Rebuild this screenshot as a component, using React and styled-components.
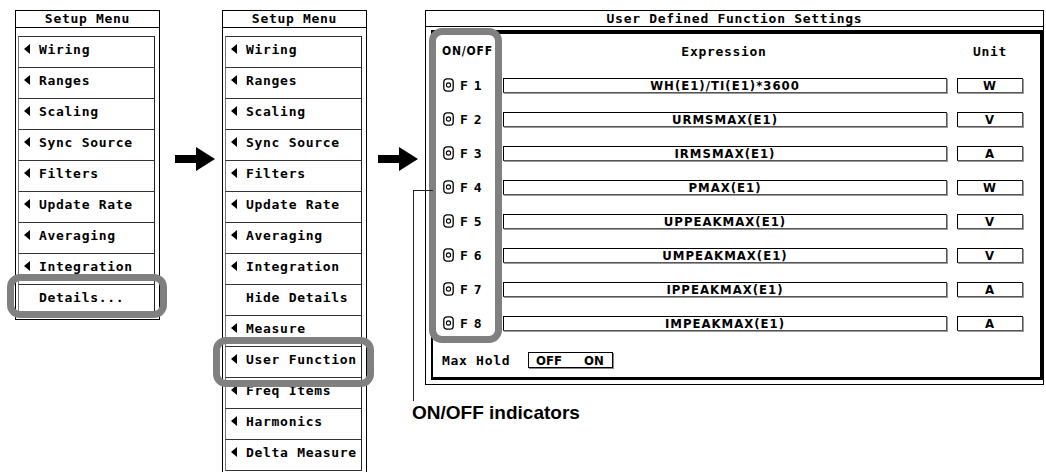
import React from 'react';
import styled, { createGlobalStyle } from 'styled-components';

const GlobalStyle = createGlobalStyle`
	html, body {
		margin: 0;
		padding: 0;
		background: #fff;
	}
	body {
		width: 1046px;
		height: 472px;
		overflow: hidden;
		font-family: "DejaVu Sans Mono", monospace;
		color: #000;
	}
`;

const screenFont = `
	font: bold 13px "DejaVu Sans Mono", monospace;
	letter-spacing: 0.7px;
`;

const narrowFont = `
	font: bold 13px "DejaVu Sans Condensed", "DejaVu Sans", sans-serif;
	letter-spacing: 1px;
`;

const Stage = styled.div`
	position: relative;
	width: 1046px;
	height: 472px;
	box-sizing: border-box;
	padding: 10px 0 0 15px;
	display: flex;
	align-items: flex-start;
`;

const Menu = styled.div`
	width: 145px;
	box-sizing: border-box;
	border: 1px solid #000;
	display: flex;
	flex-direction: column;
`;

const MenuTitle = styled.div`
	height: 16px;
	line-height: 16px;
	border-bottom: 1px solid #000;
	text-align: center;
	${screenFont}
`;

const MenuBody = styled.div`
	padding: 8px 4px 3px 2px;
	display: flex;
	flex-direction: column;
`;

const MenuButton = styled.div`
	height: 24px;
	padding: 0 0 6px 5px;
	box-sizing: content-box;
	border-top: 1px solid #333;
	border-left: 1px solid #777;
	border-right: 1px solid #222;
	display: flex;
	align-items: center;
	white-space: nowrap;
	${screenFont}

	&:last-child {
		border-bottom: 1px solid #333;
	}
`;

const Tri = styled.span`
	width: 0;
	height: 0;
	border-top: 5px solid transparent;
	border-bottom: 5px solid transparent;
	border-right: 6px solid ${({ $hidden }) => ($hidden ? 'transparent' : '#000')};
	margin-right: 9px;
	flex-shrink: 0;
`;

const ArrowBox = styled.div`
	width: 40px;
	height: 24px;
	margin: 137px ${({ $right }) => $right}px 0 ${({ $left }) => $left}px;
	flex-shrink: 0;
`;

const Panel = styled.div`
	width: 619px;
	height: 375px;
	box-sizing: border-box;
	border: 1px solid #000;
	display: flex;
	flex-direction: column;
	flex-shrink: 0;
`;

const PanelTitle = styled.div`
	height: 16px;
	line-height: 16px;
	border-bottom: 1px solid #000;
	text-align: center;
	${screenFont}
`;

const Inner = styled.div`
	flex: 1;
	margin: 3px 0 5px 5px;
	border-top: 4px solid #000;
	border-right: 3px solid #000;
	border-bottom: 3px solid #000;
	border-left: 2px solid #000;
	display: flex;
	flex-direction: column;
`;

const Row = styled.div`
	height: 34px;
	display: flex;
	align-items: center;
	padding-left: 10px;
`;

const HeadOnOff = styled.div`
	width: 60px;
	margin-left: -1px;
	font: bold 12px "DejaVu Sans Condensed", "DejaVu Sans", sans-serif;
	letter-spacing: 0.8px;
`;

const HeadCell = styled.div`
	width: ${({ $w }) => $w}px;
	margin-left: ${({ $ml }) => $ml || 0}px;
	text-align: center;
	${screenFont}
`;

const Check = styled.svg`
	width: 11px;
	height: 14px;
	margin-right: 6px;
	flex-shrink: 0;
`;

const FLabel = styled.div`
	width: 43px;
	font: bold 13px "DejaVu Sans Mono", monospace;
	letter-spacing: 6px;
`;

const Field = styled.div`
	width: ${({ $w }) => $w}px;
	height: 13px;
	margin-left: ${({ $ml }) => $ml || 0}px;
	box-sizing: content-box;
	border: 1px solid #000;
	border-right-color: #555;
	border-bottom-color: #555;
	box-shadow: 1px 1px 0 #999;
	display: flex;
	align-items: center;
	justify-content: center;
	line-height: 13px;
	${narrowFont}
`;

const MaxRow = styled.div`
	height: 34px;
	display: flex;
	align-items: center;
	padding-left: 9px;
	margin-top: 3px;
`;

const MaxLabel = styled.div`
	width: 86px;
	${screenFont}
`;

const Toggle = styled.div`
	width: 83px;
	height: 14px;
	border: 1px solid #000;
	box-shadow: 1px 1px 0 #888;
	display: flex;
	align-items: center;
	font: bold 13px "DejaVu Sans Condensed", "DejaVu Sans", sans-serif;
`;

const ToggleOpt = styled.span`
	margin-left: ${({ $ml }) => $ml}px;
`;

const Ring = styled.div`
	position: absolute;
	left: ${({ $x }) => $x}px;
	top: ${({ $y }) => $y}px;
	width: ${({ $w }) => $w}px;
	height: ${({ $h }) => $h}px;
	box-sizing: border-box;
	border: 7px solid #808080;
	border-radius: 13px;
	pointer-events: none;
`;

const Leader = styled.div`
	position: absolute;
	left: 413px;
	top: 190px;
	width: 19px;
	height: 210px;
	border-top: 1px solid #222;
	border-left: 1px solid #222;
`;

const Callout = styled.div`
	position: absolute;
	left: 412px;
	top: 402px;
	font: bold 19px "Liberation Sans", Arial, sans-serif;
	white-space: nowrap;
`;

const menu1 = ['Wiring', 'Ranges', 'Scaling', 'Sync Source', 'Filters', 'Update Rate', 'Averaging', 'Integration'];
const menu2 = [
	...menu1,
	'-Hide Details',
	'Measure',
	'User Function',
	'Freq Items',
	'Harmonics',
	'Delta Measure',
];

const funcs = [
	['WH(E1)/TI(E1)*3600', 'W'],
	['URMSMAX(E1)', 'V'],
	['IRMSMAX(E1)', 'A'],
	['PMAX(E1)', 'W'],
	['UPPEAKMAX(E1)', 'V'],
	['UMPEAKMAX(E1)', 'V'],
	['IPPEAKMAX(E1)', 'A'],
	['IMPEAKMAX(E1)', 'A'],
];

const Arrow = ({ left, right }) => (
	<ArrowBox $left={left} $right={right}>
		<svg width="40" height="24" viewBox="0 0 40 24">
			<path d="M0 8 H21 V0 L40 12 L21 24 V16 H0 Z" fill="#000" />
		</svg>
	</ArrowBox>
);

const SetupMenu = ({ items }) => (
	<Menu>
		<MenuTitle>Setup Menu</MenuTitle>
		<MenuBody>
			{items.map((item) => {
				const plain = item.startsWith('-');
				return (
					<MenuButton key={item}>
						<Tri $hidden={plain} />
						{plain ? item.slice(1) : item}
					</MenuButton>
				);
			})}
		</MenuBody>
	</Menu>
);

const CheckIcon = () => (
	<Check viewBox="0 0 11 14">
		<rect x="0.8" y="0.8" width="9.4" height="12.4" rx="3.2" fill="none" stroke="#000" strokeWidth="1.3" />
		<circle cx="5.5" cy="7" r="2.1" fill="none" stroke="#000" strokeWidth="1.1" />
	</Check>
);

const App = () => (
	<>
		<GlobalStyle />
		<Stage>
			<SetupMenu items={[...menu1, '-Details...']} />
			<Arrow left={15} right={7} />
			<SetupMenu items={menu2} />
			<Arrow left={11} right={7} />
			<Panel>
				<PanelTitle>User Defined Function Settings</PanelTitle>
				<Inner>
					<Row>
						<HeadOnOff>ON/OFF</HeadOnOff>
						<HeadCell $w={444}>Expression</HeadCell>
						<HeadCell $w={68} $ml={10}>Unit</HeadCell>
					</Row>
					{funcs.map(([expr, unit], i) => (
						<Row key={expr}>
							<CheckIcon />
							<FLabel>F{i + 1}</FLabel>
							<Field $w={442}>{expr}</Field>
							<Field $w={64} $ml={10}>{unit}</Field>
						</Row>
					))}
					<MaxRow>
						<MaxLabel>Max Hold</MaxLabel>
						<Toggle>
							<ToggleOpt $ml={7}>OFF</ToggleOpt>
							<ToggleOpt $ml={22}>ON</ToggleOpt>
						</Toggle>
					</MaxRow>
				</Inner>
			</Panel>
			<Ring $x={7} $y={274} $w={160} $h={44} />
			<Ring $x={213} $y={337} $w={161} $h={50} />
			<Ring $x={429} $y={28} $w={73} $h={315} />
			<Leader />
			<Callout>ON/OFF indicators</Callout>
		</Stage>
	</>
);

export default App;
